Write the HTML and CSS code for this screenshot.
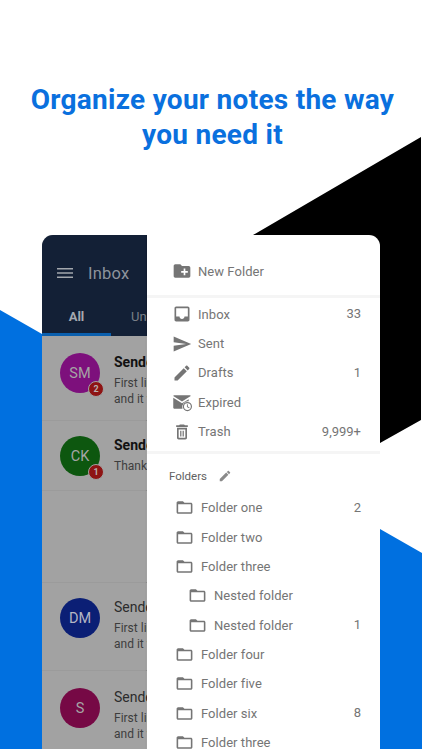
FILE: index.html
```html
<!DOCTYPE html>
<html lang="en">
<head>
<meta charset="utf-8">
<title>Organize your notes</title>
<link rel="stylesheet" href="styles.css">
</head>
<body>
<svg class="shapes" width="422" height="750" viewBox="0 0 422 750" aria-hidden="true">
  <polygon fill="#000" points="253,235 421,137 421,420 380,443 360,443 360,235"/>
  <polygon fill="#0070e0" points="0,310 42,334 42,749 0,749"/>
  <polygon fill="#0070e0" points="380,529 422,553 422,749 380,749"/>
</svg>
<svg width="0" height="0" class="defs" aria-hidden="true">
  <symbol id="folder" viewBox="0 0 24 24"><path d="M20 6h-8l-2-2H4c-1.1 0-1.99.9-1.99 2L2 18c0 1.1.9 2 2 2h16c1.1 0 2-.9 2-2V8c0-1.1-.9-2-2-2zm0 12H4V8h16v10z"/></symbol>
  <symbol id="edit" viewBox="0 0 24 24"><path d="M3 17.25V21h3.75L17.81 9.94l-3.75-3.75L3 17.25zM20.71 7.04c.39-.39.39-1.02 0-1.41l-2.34-2.34c-.39-.39-1.02-.39-1.41 0l-1.83 1.83 3.75 3.75 1.83-1.83z"/></symbol>
</svg>
<h1 class="title">Organize your notes the way<br>you need it</h1>
<main class="phone">
  <section class="inbox">
    <header class="appbar">
      <div class="appbar-top">
        <svg class="menu" viewBox="0 0 16 12" width="16" height="12"><path d="M0 1h16v1.4H0zM0 5.3h16v1.4H0zM0 9.6h16V11H0z"/></svg>
        <span class="appbar-title">Inbox</span>
      </div>
      <div class="tabs"><span class="tab active">All</span><span class="tab">Un</span></div>
    </header>
    <div class="msg first">
      <div class="avatar purple">SM<span class="badge">2</span></div>
      <div class="msg-text"><b>Sender</b><span>First line</span><span>and it wraps</span></div>
    </div>
    <div class="msg short">
      <div class="avatar green">CK<span class="badge">1</span></div>
      <div class="msg-text"><b>Sender</b><span>Thanks</span></div>
    </div>
    <div class="msg gap"></div>
    <div class="msg tall">
      <div class="avatar navy">DM</div>
      <div class="msg-text"><em>Sender</em><span>First line</span><span>and it wraps</span></div>
    </div>
    <div class="msg last">
      <div class="avatar wine">S</div>
      <div class="msg-text"><em>Sender</em><span>First line</span><span>and it wraps</span></div>
    </div>
  </section>
  <nav class="drawer">
    <div class="row new-folder"><svg class="icon" viewBox="0 0 24 24"><path d="M20 6h-8l-2-2H4c-1.11 0-1.99.89-1.99 2L2 18c0 1.11.89 2 2 2h16c1.11 0 2-.89 2-2V8c0-1.11-.89-2-2-2zm-1 8h-3v3h-2v-3h-3v-2h3V9h2v3h3v2z"/></svg><span class="label">New Folder</span></div>
    <div class="group">
      <div class="row"><svg class="icon" viewBox="0 0 24 24"><path d="M19 3H4.99c-1.11 0-1.98.89-1.98 2L3 19c0 1.1.88 2 1.99 2H19c1.1 0 2-.9 2-2V5c0-1.11-.9-2-2-2zm0 12h-4c0 1.66-1.35 3-3 3s-3-1.34-3-3H4.99V5H19v10z"/></svg><span class="label">Inbox</span><span class="count">33</span></div>
      <div class="row"><svg class="icon" viewBox="0 0 24 24"><path d="M2.01 21L23 12 2.01 3 2 10l15 2-15 2z"/></svg><span class="label">Sent</span></div>
      <div class="row"><svg class="icon"><use href="#edit"/></svg><span class="label">Drafts</span><span class="count">1</span></div>
      <div class="row"><svg class="icon" viewBox="0 0 24 24"><path d="M2.5 4h19c.5 0 .9.3 1 .8L12 11.5 1.5 4.800c.1-.5.5-.8 1-.8zM1.500 7l10.500 6.600 8-5V11.100a7 7 0 0 0-7.400 8.900H2.500c-.6 0-1-.4-1-1z"/><path d="M18.500 12a5.500 5.500 0 1 0 0 11 5.500 5.500 0 0 0 0-11zm0 9.600a4.100 4.100 0 1 1 0-8.200 4.100 4.100 0 0 1 0 8.200zm.5-6.900h-1.100v3.300l2.700 1.500.5-.9-2.100-1.200z"/></svg><span class="label">Expired</span></div>
      <div class="row"><svg class="icon" viewBox="0 0 24 24"><path d="M6 19c0 1.100.9 2 2 2h8c1.100 0 2-.9 2-2V7H6v12zM8 9h8v10H8V9zm7.500-5l-1-1h-5l-1 1H5v2h14V4zM9.800 10.500h1.500v7H9.800zM12.700 10.500h1.500v7h-1.500z"/></svg><span class="label">Trash</span><span class="count">9,999+</span></div>
    </div>
    <div class="folders-head"><span>Folders</span><svg class="icon-small"><use href="#edit"/></svg></div>
    <div class="folders">
      <div class="row folder"><svg class="icon"><use href="#folder"/></svg><span class="label">Folder one</span><span class="count">2</span></div>
      <div class="row folder"><svg class="icon"><use href="#folder"/></svg><span class="label">Folder two</span></div>
      <div class="row folder"><svg class="icon"><use href="#folder"/></svg><span class="label">Folder three</span></div>
      <div class="row folder nested"><svg class="icon"><use href="#folder"/></svg><span class="label">Nested folder</span></div>
      <div class="row folder nested"><svg class="icon"><use href="#folder"/></svg><span class="label">Nested folder</span><span class="count">1</span></div>
      <div class="row folder"><svg class="icon"><use href="#folder"/></svg><span class="label">Folder four</span></div>
      <div class="row folder"><svg class="icon"><use href="#folder"/></svg><span class="label">Folder five</span></div>
      <div class="row folder"><svg class="icon"><use href="#folder"/></svg><span class="label">Folder six</span><span class="count">8</span></div>
      <div class="row folder"><svg class="icon"><use href="#folder"/></svg><span class="label">Folder three</span></div>
    </div>
  </nav>
</main>
</body>
</html>
```
FILE: styles.css
```css
* { box-sizing: border-box; }
html, body { margin: 0; height: 750px; overflow: hidden; background: #fff; }
body { position: relative; font-family: Roboto, "Liberation Sans", sans-serif; }
.shapes { position: absolute; left: 0; top: 0; }
.defs { position: absolute; }
.title {
  position: relative;
  margin: 0;
  padding: 82px 0 0 3px;
  height: 235px;
  text-align: center;
  font-family: Roboto, sans-serif;
  font-size: 28px;
  letter-spacing: .27px;
  font-weight: 700;
  line-height: 35px;
  color: #0a70de;
}
.phone {
  position: relative;
  display: flex;
  width: 338px;
  height: 514px;
  margin-left: 42px;
  border-radius: 11px 11px 0 0;
  overflow: hidden;
}
.inbox { width: 105px; flex: none; background: #a2a2a2; overflow: hidden; box-shadow: inset -1px 0 0 #b5b5b5; }
.appbar { height: 101px; background: #132036; display: flex; flex-direction: column; }
.appbar-top { height: 65px; padding: 11px 0 0 15px; display: flex; align-items: center; gap: 15px; }
.menu { fill: #a3a7ad; flex: none; }
.appbar-title { font-size: 16.5px; color: #8d939c; letter-spacing: .2px; }
.tabs { flex: 1; display: flex; align-items: center; font-size: 13px; color: #7a8089; white-space: nowrap; }
.tab { width: 69px; flex: none; padding: 0 0 3px 20px; }
.tab.active { color: #a5a9b0; font-weight: 700; position: relative; align-self: stretch; display: flex; align-items: center; justify-content: center; padding: 0 0 3px; }
.tab.active::after { content: ""; position: absolute; left: 0; right: 0; bottom: 0; height: 3px; background: #0a5fae; }
.msg { display: flex; gap: 14px; padding-left: 18px; border-bottom: 1px solid #9b9b9b; white-space: nowrap; }
.msg.first { height: 85px; padding-top: 17px; }
.msg.short { height: 70px; padding-top: 15px; }
.msg.gap { height: 92px; }
.msg.tall { height: 88px; padding-top: 15px; }
.msg.last { border-bottom: 0; height: 90px; padding-top: 17px; }
.avatar {
  position: relative;
  flex: none;
  width: 40px;
  height: 40px;
  border-radius: 50%;
  display: flex;
  align-items: center;
  justify-content: center;
  font-size: 14.5px;
  color: #a5a5a5;
}
.purple { background: #7d107c; }
.green { background: #0d570f; }
.navy { background: #0b1f75; color: #b4b6c4; }
.wine { background: #760945; }
.badge {
  position: absolute;
  right: -4px;
  bottom: -4px;
  width: 14px;
  height: 14px;
  border-radius: 50%;
  background: #8e1414;
  border: 1px solid #a2a2a2;
  box-sizing: content-box;
  color: #b9b0b0;
  font-size: 9px;
  font-weight: 700;
  display: flex;
  align-items: center;
  justify-content: center;
}
.msg-text { display: flex; flex-direction: column; font-size: 12px; line-height: 15.5px; color: #3d3d3d; }
.msg-text b { font-size: 14px; color: #111; line-height: 18px; margin-bottom: 5px; }
.msg-text em { font-style: normal; font-size: 14px; color: #2c2c2c; line-height: 18px; margin-bottom: 5px; }
.drawer {
  width: 233px;
  flex: none;
  background: #fff;
  padding-top: 21px;
  box-shadow: -1px 0 1px rgba(0,0,0,.1);
  overflow: hidden;
}
.row { display: flex; align-items: center; height: 29.4px; padding: 0 19px 0 25px; color: #757575; font-size: 13px; white-space: nowrap; }
.icon { width: 20px; height: 20px; flex: none; fill: #757575; margin-right: 6px; }
.label { flex: 1; letter-spacing: .05px; }
.count { margin-top: -1px; }
.new-folder { height: 30px; }
.group { margin-top: 9px; border-top: 3px solid #f5f5f5; border-bottom: 3px solid #f5f5f5; padding: 1.5px 0 4.5px; }
.folders-head { display: flex; align-items: center; gap: 11px; padding: 11px 0 0 22px; height: 33px; font-size: 11.5px; color: #616161; }
.icon-small { width: 14px; height: 14px; fill: #8a8a8a; }
.folders { margin-top: 1px; padding-top: 5px; }
.folder { padding-left: 28px; }
.folder .icon { width: 19px; height: 19px; margin-right: 7px; }
.nested { padding-left: 41px; }
```
